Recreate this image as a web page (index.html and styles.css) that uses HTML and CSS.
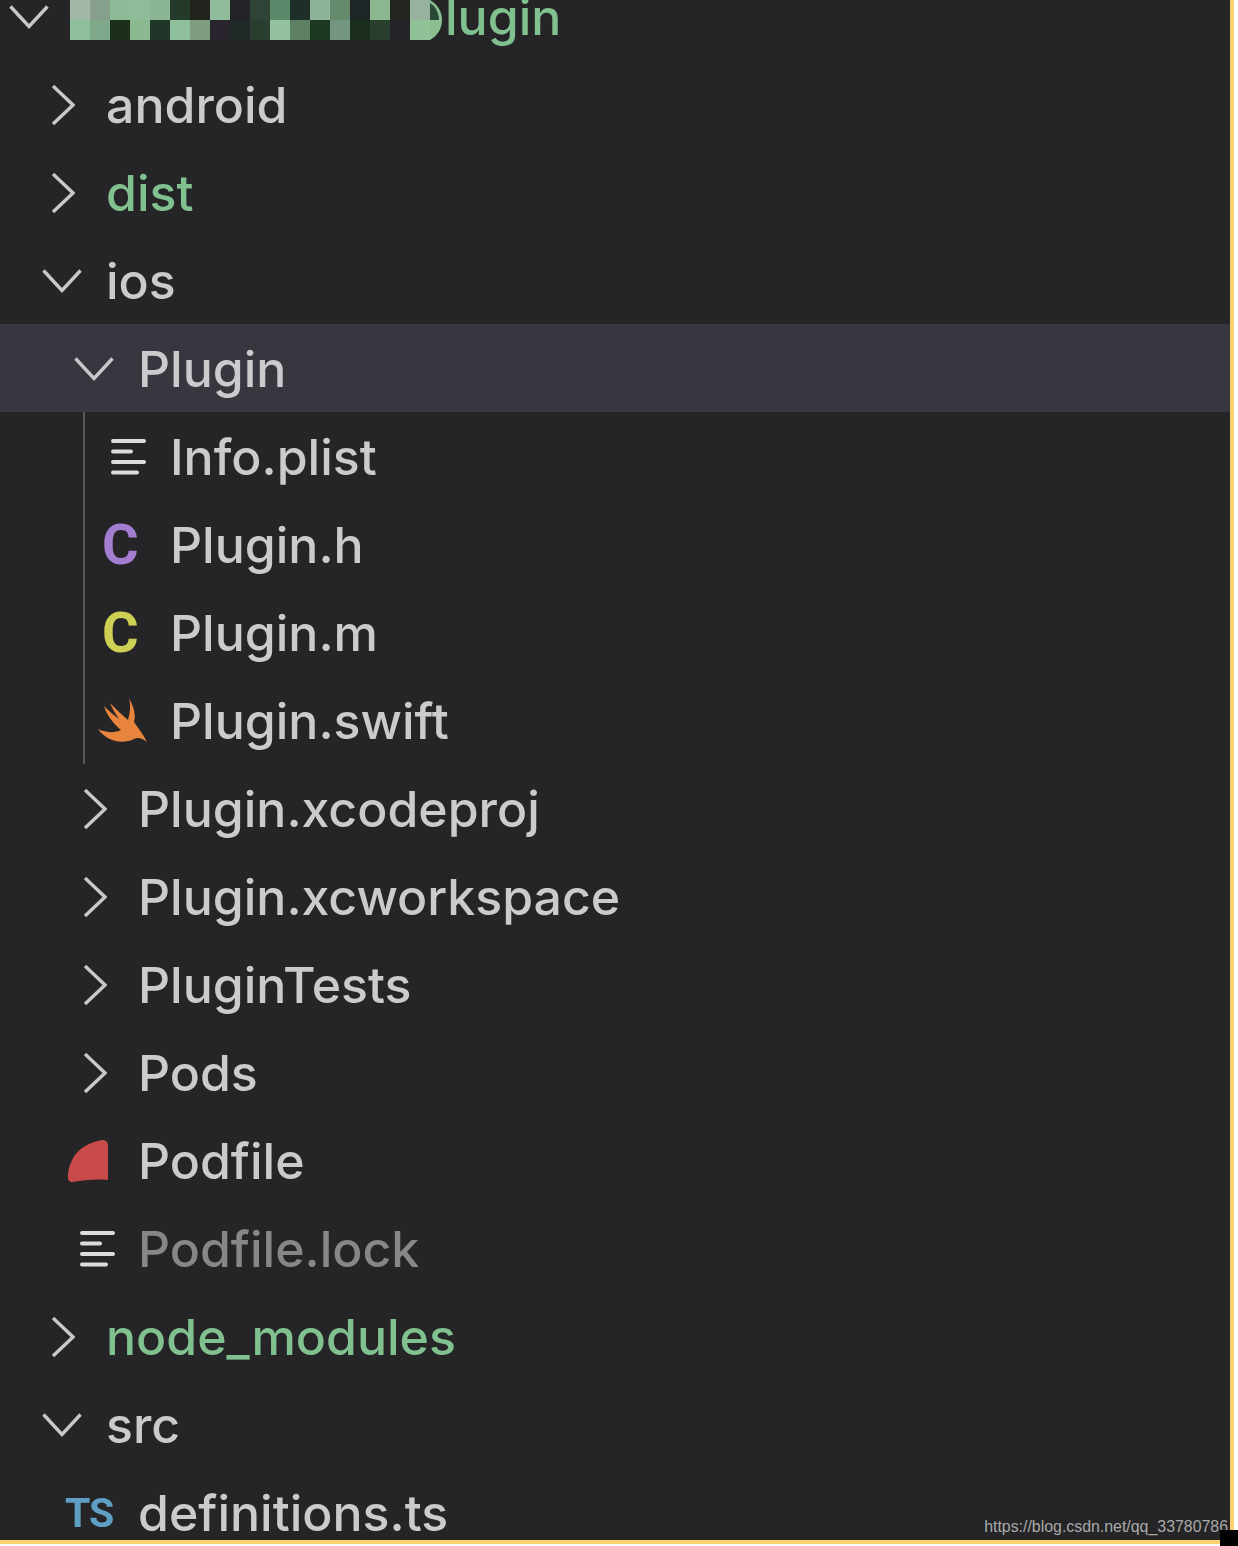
FILE: index.html

```html
<!DOCTYPE html>
<html lang="en">
<head>
  <meta charset="UTF-8" />
  <title>Explorer</title>
  <link rel="stylesheet" href="styles.css">
</head>
<body>
  <svg class="sprites" width="0" height="0">
    <symbol id="chev-down" viewBox="0 0 40 24"><path d="M1.5 1.5 20 21.5 38.500 1.500" /></symbol>
    <symbol id="chev-right" viewBox="0 0 24 44"><path d="M2 3 22 22 2 41" /></symbol>
    <symbol id="lines" viewBox="0 0 36 36"><path d="M3 2H34M3 12.500H21M3 23H34M3 33.500H27" /></symbol>
  </svg>

  <div class="shot">
    <div class="tree">
      <div class="row d0 added">
        <span class="twistie"><svg class="chev-d"><use href="#chev-down"/></svg></span>
        <svg class="mosaic" viewBox="0 0 372 40" width="372" height="40" shape-rendering="crispEdges">
          <rect x="0" width="20" height="20" fill="#a3b8a8"/><rect x="20" width="20" height="20" fill="#87a08d"/>
          <rect x="40" width="20" height="20" fill="#8dbb98"/><rect x="60" width="20" height="20" fill="#8fbc98"/>
          <rect x="80" width="20" height="20" fill="#8cb595"/><rect x="100" width="20" height="20" fill="#263a2c"/>
          <rect x="120" width="20" height="20" fill="#22231c"/><rect x="140" width="20" height="20" fill="#8fbd9b"/>
          <rect x="160" width="20" height="20" fill="#232427"/><rect x="180" width="20" height="20" fill="#2e4437"/>
          <rect x="200" width="20" height="20" fill="#5b8a6b"/><rect x="220" width="20" height="20" fill="#1e2e29"/>
          <rect x="240" width="20" height="20" fill="#8db49b"/><rect x="260" width="20" height="20" fill="#658a6c"/>
          <rect x="280" width="20" height="20" fill="#1e2526"/><rect x="300" width="20" height="20" fill="#8cb88f"/>
          <rect x="320" width="20" height="20" fill="#22261f"/><rect x="340" width="20" height="20" fill="#97b3a0"/>
          <rect x="0" y="20" width="20" height="20" fill="#8cbf9a"/><rect x="20" y="20" width="20" height="20" fill="#7fa98a"/>
          <rect x="40" y="20" width="20" height="20" fill="#1b2f1b"/><rect x="60" y="20" width="20" height="20" fill="#8bba90"/>
          <rect x="80" y="20" width="20" height="20" fill="#1f3628"/><rect x="100" y="20" width="20" height="20" fill="#8fc09c"/>
          <rect x="120" y="20" width="20" height="20" fill="#7d9c80"/><rect x="140" y="20" width="20" height="20" fill="#29242d"/>
          <rect x="160" y="20" width="20" height="20" fill="#1f2a28"/><rect x="180" y="20" width="20" height="20" fill="#2a3e30"/>
          <rect x="200" y="20" width="20" height="20" fill="#94c29f"/><rect x="220" y="20" width="20" height="20" fill="#5f7f62"/>
          <rect x="240" y="20" width="20" height="20" fill="#1d3820"/><rect x="260" y="20" width="20" height="20" fill="#749680"/>
          <rect x="280" y="20" width="20" height="20" fill="#1b2e1e"/><rect x="300" y="20" width="20" height="20" fill="#293f2e"/>
          <rect x="320" y="20" width="20" height="20" fill="#222427"/><rect x="340" y="20" width="20" height="20" fill="#8fc296"/>
          <path d="M360 0V20H372C372 11 367 4 360 0Z" fill="#2a4a38" shape-rendering="auto"/>
          <path d="M360 20V40C367 36 372 29 372 20Z" fill="#8cc092" shape-rendering="auto"/>
          <path d="M360 0C367 4 372 11 372 20H369C369 12 365 6 360 3Z" fill="#8cc092" shape-rendering="auto"/>
        </svg>
        <span class="label root-label">lugin</span>
      </div>

      <div class="row d1"><span class="twistie"><svg class="chev-r"><use href="#chev-right"/></svg></span><span class="label">android</span></div>
      <div class="row d1 added"><span class="twistie"><svg class="chev-r"><use href="#chev-right"/></svg></span><span class="label">dist</span></div>
      <div class="row d1"><span class="twistie"><svg class="chev-d"><use href="#chev-down"/></svg></span><span class="label">ios</span></div>
      <div class="row d2 selected"><span class="twistie"><svg class="chev-d"><use href="#chev-down"/></svg></span><span class="label">Plugin</span></div>

      <div class="guide">
        <div class="row file"><span class="twistie"><svg class="lines"><use href="#lines"/></svg></span><span class="label">Info.plist</span></div>
        <div class="row file"><span class="twistie"><span class="letter purple">C</span></span><span class="label">Plugin.h</span></div>
        <div class="row file"><span class="twistie"><span class="letter yellow">C</span></span><span class="label">Plugin.m</span></div>
        <div class="row file">
          <span class="twistie">
            <svg class="swift" viewBox="0 0 50 44"><path d="M31 0C36 9 38 17 36 24 40 30 45 36 49 44 44 40 40 39 36 41 26 46 10 45 0 31 9 35 17 35 23 32 16 26 9 18 6 8 12 14 17 18 21 21 17 15 14 10 12 5 18 11 24 17 30 22 32 15 33 7 31 0Z"/></svg>
          </span>
          <span class="label">Plugin.swift</span>
        </div>
      </div>

      <div class="row d2"><span class="twistie"><svg class="chev-r"><use href="#chev-right"/></svg></span><span class="label">Plugin.xcodeproj</span></div>
      <div class="row d2"><span class="twistie"><svg class="chev-r"><use href="#chev-right"/></svg></span><span class="label">Plugin.xcworkspace</span></div>
      <div class="row d2"><span class="twistie"><svg class="chev-r"><use href="#chev-right"/></svg></span><span class="label">PluginTests</span></div>
      <div class="row d2"><span class="twistie"><svg class="chev-r"><use href="#chev-right"/></svg></span><span class="label">Pods</span></div>
      <div class="row d2-file">
        <span class="twistie"><svg class="ruby" viewBox="0 0 42 42"><path d="M1 37C1 30 3 22 8 15 14 7 24 2 35 0 39 0 41 2 41 6L41 40C30 39 16 40 6 42 2 42 1 40 1 37Z"/></svg></span>
        <span class="label">Podfile</span>
      </div>
      <div class="row d2-file ignored">
        <span class="twistie"><svg class="lines"><use href="#lines"/></svg></span>
        <span class="label">Podfile.lock</span>
      </div>
      <div class="row d1 added"><span class="twistie"><svg class="chev-r"><use href="#chev-right"/></svg></span><span class="label">node_modules</span></div>
      <div class="row d1"><span class="twistie"><svg class="chev-d"><use href="#chev-down"/></svg></span><span class="label">src</span></div>
      <div class="row d2-file">
        <span class="twistie"><span class="letter ts">TS</span></span>
        <span class="label">definitions.ts</span>
      </div>
    </div>
    <div class="watermark">https://blog.csdn.net/qq_33780786</div>
  </div>
  <div class="corner"></div>
</body>
</html>
```

FILE: styles.css

```css
:root {
  --fondo: #252527;
  --texto: #cbcbcd;
  --verde: #81c08f;
  --amarillo: #fbd26f;
}

html, body {
  margin: 0;
  background: #fff;
}

body {
  position: relative;
  width: 1238px;
  height: 1546px;
  overflow: hidden;
  font-family: Inter, "Noto Sans", sans-serif;
}

.sprites {
  position: absolute;
}

.shot {
  position: relative;
  width: 1230px;
  height: 1540px;
  background: var(--fondo);
  border-right: 4px solid var(--amarillo);
  border-bottom: 4px solid var(--amarillo);
  overflow: hidden;
}

.tree {
  margin-top: -28px;
  filter: blur(0.7px);
}

.row {
  display: flex;
  align-items: center;
  height: 88px;
  color: var(--texto);
  font-size: 50px;
  font-weight: 500;
}

.row.selected {
  background: #37373f;
}

.d0 { padding-left: 10px; }
.d1 { padding-left: 43px; }
.d2 { padding-left: 75px; }
.d2-file { padding-left: 75px; }

.twistie {
  display: flex;
  align-items: center;
  flex: none;
  width: 63px;
  height: 88px;
}

.d0 .twistie {
  width: 60px;
}

.chev-d, .chev-r {
  fill: none;
  stroke: #c8c8ca;
  stroke-width: 3.4;
}

.chev-d {
  width: 40px;
  height: 24px;
  margin: 2px 0 0 -1px;
}

.chev-r {
  width: 24px;
  height: 44px;
  margin: 2px 0 0 8px;
}

.label {
  margin-top: 2px;
  white-space: nowrap;
}

.added .label {
  color: var(--verde);
}

.ignored .label {
  color: #87878a;
}

.mosaic {
  flex: none;
  margin-top: 8px;
}

.root-label {
  margin-left: 3px;
}

.guide {
  margin-left: 83px;
  border-left: 2px solid #58585b;
}

.file {
  padding-left: 22px;
}

.lines {
  width: 36px;
  height: 36px;
  margin-top: 2px;
  fill: none;
  stroke: #dcdcde;
  stroke-width: 4;
  stroke-linecap: round;
}

.file .lines {
  margin-left: 3px;
}

.d2-file .lines {
  margin-left: 4px;
}

.letter {
  font-family: Roboto, sans-serif;
  font-weight: 700;
  line-height: 1;
}

.purple {
  color: #a27dd0;
  font-size: 56px;
  margin: 2px 0 0 -5px;
}

.yellow {
  color: #cdd053;
  font-size: 56px;
  margin: 2px 0 0 -5px;
}

.ts {
  color: #5f9fc3;
  font-size: 41px;
  letter-spacing: -1px;
  margin: 2px 0 0 -10px;
}

.swift {
  width: 50px;
  height: 44px;
  margin: 0 0 0 -9px;
  fill: #e8843c;
}

.ruby {
  width: 42px;
  height: 42px;
  margin: 2px 0 0 -8px;
  fill: #c94a4a;
}

.watermark {
  position: absolute;
  right: 2px;
  bottom: 4px;
  color: #a9a9a9;
  font: 15.900px "Liberation Sans", Arial, sans-serif;
}

.corner {
  position: absolute;
  left: 1220px;
  top: 1530px;
  width: 18px;
  height: 16px;
  background: #000;
}
```
